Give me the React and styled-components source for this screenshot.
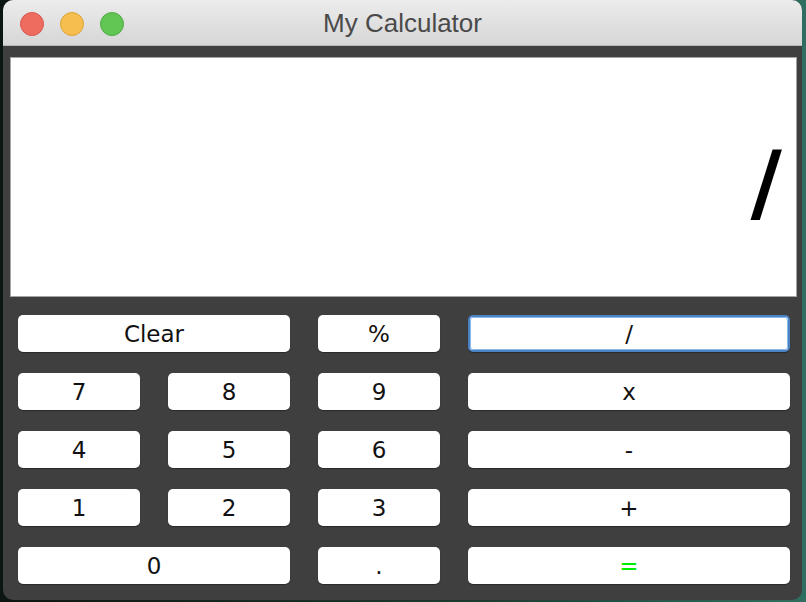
import React from 'react';
import styled, { createGlobalStyle } from 'styled-components';

const GlobalStyle = createGlobalStyle`
  html, body {
    margin: 0;
    padding: 0;
    width: 806px;
    height: 602px;
    overflow: hidden;
    background: linear-gradient(90deg, #0d1512 0%, #1d3a30 60%, #2f6e60 100%);
  }
  * { box-sizing: border-box; }
`;

const keys = [
  { label: 'Clear', span: 2 },
  { label: '%' },
  { label: '/', focused: true },
  { label: '7' },
  { label: '8' },
  { label: '9' },
  { label: 'x' },
  { label: '4' },
  { label: '5' },
  { label: '6' },
  { label: '-' },
  { label: '1' },
  { label: '2' },
  { label: '3' },
  { label: '+' },
  { label: '0', span: 2 },
  { label: '.' },
  { label: '=', accent: true },
];

function App() {
  return (
    <>
      <GlobalStyle />
      <Desktop>
        <Window>
          <TitleBar>
            <Lights>
              <Light color="#ee6b5f" edge="#d6574c" />
              <Light color="#f6be4f" edge="#dca33a" />
              <Light color="#62c655" edge="#4fab42" />
            </Lights>
            <Title>My Calculator</Title>
          </TitleBar>
          <Body>
            <Display>/</Display>
            <Keypad>
              {keys.map((k) => (
                <Key key={k.label} span={k.span} focused={k.focused} accent={k.accent}>
                  {k.label}
                </Key>
              ))}
            </Keypad>
          </Body>
        </Window>
      </Desktop>
    </>
  );
}

const Desktop = styled.div`
  width: 806px;
  height: 602px;
  padding: 0 4px 2px 3px;
  display: flex;
`;

const Window = styled.div`
  flex: 1;
  display: flex;
  flex-direction: column;
  border-radius: 10px;
  overflow: hidden;
  background: #3f3f3f;
`;

const TitleBar = styled.div`
  position: relative;
  height: 46px;
  flex-shrink: 0;
  display: flex;
  align-items: center;
  justify-content: center;
  background: linear-gradient(#ececec, #d6d6d6);
  border-bottom: 1px solid #b8b8b8;
`;

const Lights = styled.div`
  position: absolute;
  left: 17px;
  top: 12px;
  display: flex;
  gap: 16px;
`;

const Light = styled.span`
  width: 24px;
  height: 24px;
  border-radius: 50%;
  background: ${(p) => p.color};
  border: 1px solid ${(p) => p.edge};
`;

const Title = styled.div`
  font-family: 'Liberation Sans', Arial, sans-serif;
  font-size: 26px;
  color: #4a4a4a;
  margin-top: 2px;
`;

const Body = styled.div`
  flex: 1;
  display: flex;
  flex-direction: column;
  padding: 11px 5px 0 7px;
`;

const Display = styled.div`
  height: 240px;
  background: #fff;
  border: 1px solid #a4a4a4;
  display: flex;
  align-items: center;
  justify-content: flex-end;
  padding: 10px 14px 0 0;
  font-family: 'DejaVu Sans', sans-serif;
  font-weight: bold;
  font-size: 86px;
  color: #000;
`;

const Keypad = styled.div`
  display: grid;
  grid-template-columns: 122px 122px 122px 322px;
  grid-auto-rows: 37px;
  column-gap: 28px;
  row-gap: 21px;
  padding: 18px 0 0 8px;
`;

const Key = styled.div`
  ${(p) => (p.span === 2 ? 'grid-column: span 2;' : '')}
  background: #fff;
  border-radius: 5px;
  display: flex;
  align-items: center;
  justify-content: center;
  font-family: 'DejaVu Sans', sans-serif;
  font-size: 23px;
  color: ${(p) => (p.accent ? '#00ee00' : '#111')};
  box-shadow: 0 1px 1px rgba(0, 0, 0, 0.35);
  border: ${(p) => (p.focused ? '2px solid #4a83c4' : 'none')};
  outline: ${(p) => (p.focused ? '1px solid #8db8e8' : 'none')};
  outline-offset: -3px;
`;

export default App;
